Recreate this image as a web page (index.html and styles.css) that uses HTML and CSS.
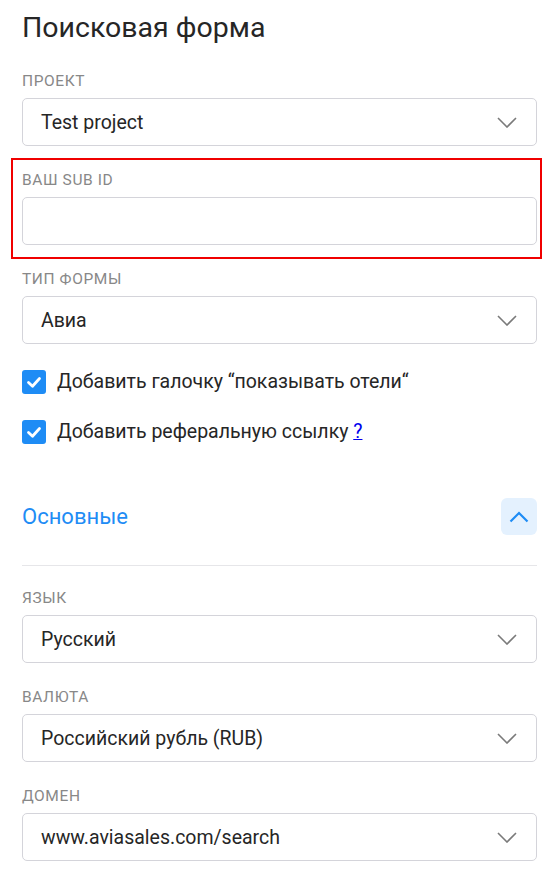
FILE: index.html
```html
<!DOCTYPE html>
<html lang="ru">
<head>
    <meta charset="UTF-8">
    <meta name="viewport" content="width=device-width, initial-scale=1.0">
    <title>Поисковая форма</title>
    <link rel="stylesheet" href="styles.css">
</head>
<body>
    <div class="main">
        <h1 class="title">Поисковая форма</h1>

        <div class="field">
            <div class="label">Проект</div>
            <div class="select">
                <span>Test project</span>
                <svg class="arrow" width="20" height="11" viewBox="0 0 20 11"><path d="M1 1 L10 10 L19 1" fill="none" stroke="#7a7a7a" stroke-width="1.6"/></svg>
            </div>
        </div>

        <div class="field marked">
            <div class="label">Ваш Sub ID</div>
            <input type="text" class="textview">
        </div>

        <div class="field">
            <div class="label">Тип формы</div>
            <div class="select">
                <span>Авиа</span>
                <svg class="arrow" width="20" height="11" viewBox="0 0 20 11"><path d="M1 1 L10 10 L19 1" fill="none" stroke="#7a7a7a" stroke-width="1.6"/></svg>
            </div>
        </div>

        <div class="checks">
            <label class="check">
                <span class="box"><svg width="24" height="24" viewBox="0 0 24 24"><path d="M6.5 12.5 L10.5 16.2 L17.5 8.5" fill="none" stroke="#fff" stroke-width="2.8" stroke-linecap="round" stroke-linejoin="round"/></svg></span>
                <span>Добавить галочку “показывать отели“</span>
            </label>
            <label class="check">
                <span class="box"><svg width="24" height="24" viewBox="0 0 24 24"><path d="M6.5 12.5 L10.5 16.2 L17.5 8.5" fill="none" stroke="#fff" stroke-width="2.8" stroke-linecap="round" stroke-linejoin="round"/></svg></span>
                <span>Добавить реферальную ссылку <a href="#">?</a></span>
            </label>
        </div>

        <div class="section">
            <span class="section-name">Основные</span>
            <button class="toggle"><svg width="20" height="12" viewBox="0 0 20 12"><path d="M1.5 10.5 L10 2 L18.5 10.5" fill="none" stroke="#1e8cf5" stroke-width="2.2"/></svg></button>
        </div>

        <div class="field">
            <div class="label">Язык</div>
            <div class="select">
                <span>Русский</span>
                <svg class="arrow" width="20" height="11" viewBox="0 0 20 11"><path d="M1 1 L10 10 L19 1" fill="none" stroke="#7a7a7a" stroke-width="1.6"/></svg>
            </div>
        </div>

        <div class="field">
            <div class="label">Валюта</div>
            <div class="select">
                <span>Российский рубль (RUB)</span>
                <svg class="arrow" width="20" height="11" viewBox="0 0 20 11"><path d="M1 1 L10 10 L19 1" fill="none" stroke="#7a7a7a" stroke-width="1.6"/></svg>
            </div>
        </div>

        <div class="field">
            <div class="label">Домен</div>
            <div class="select">
                <span>www.aviasales.com/search</span>
                <svg class="arrow" width="20" height="11" viewBox="0 0 20 11"><path d="M1 1 L10 10 L19 1" fill="none" stroke="#7a7a7a" stroke-width="1.6"/></svg>
            </div>
        </div>
    </div>
</body>
</html>
```

FILE: styles.css
```css
* {
    padding: 0;
    margin: 0;
    box-sizing: border-box;
}

body {
    font-family: Roboto, "Noto Sans", sans-serif;
    color: #262626;
    background-color: white;
}

.main {
    width: 515px;
    margin-left: 22px;
    padding-top: 12px;
}

.title {
    font-size: 28.5px;
    font-weight: 400;
    line-height: 32px;
    margin-bottom: 27px;
}

.field {
    margin-bottom: 24px;
}
.marked {
    position: relative;
}
.marked::after {
    content: "";
    position: absolute;
    top: -12px;
    left: -11px;
    right: -5px;
    bottom: -14px;
    border: 2px solid #f00000;
}

.label {
    font-size: 15.5px;
    line-height: 20px;
    letter-spacing: 0.6px;
    color: #888;
    text-transform: uppercase;
    margin-bottom: 7px;
}

.select, .textview {
    display: flex;
    align-items: center;
    justify-content: space-between;
    width: 100%;
    height: 48px;
    padding: 0 19px 0 18px;
    border: 1px solid #d4d4da;
    border-radius: 5px;
    font-family: inherit;
    font-size: 19.5px;
    color: #262626;
    background-color: white;
}

.checks {
    display: flex;
    flex-direction: column;
    gap: 26px;
    padding-top: 2px;
}
.check {
    display: flex;
    align-items: center;
    gap: 11px;
    font-size: 19.5px;
    line-height: 24px;
}
.box {
    width: 24px;
    height: 24px;
    border-radius: 3px;
    background-color: #1e8cf5;
}
.box svg {
    display: block;
}
.check a {
    color: #0000ee;
}

.section {
    display: flex;
    align-items: center;
    justify-content: space-between;
    margin-top: 54px;
    padding-bottom: 30px;
    margin-bottom: 22px;
    border-bottom: 1px solid #e6e6e9;
}
.section-name {
    font-size: 22px;
    color: #1e8cf5;
}
.toggle {
    display: flex;
    align-items: center;
    justify-content: center;
    width: 36px;
    height: 37px;
    border: none;
    border-radius: 6px;
    background-color: #e4f1fe;
}
```
